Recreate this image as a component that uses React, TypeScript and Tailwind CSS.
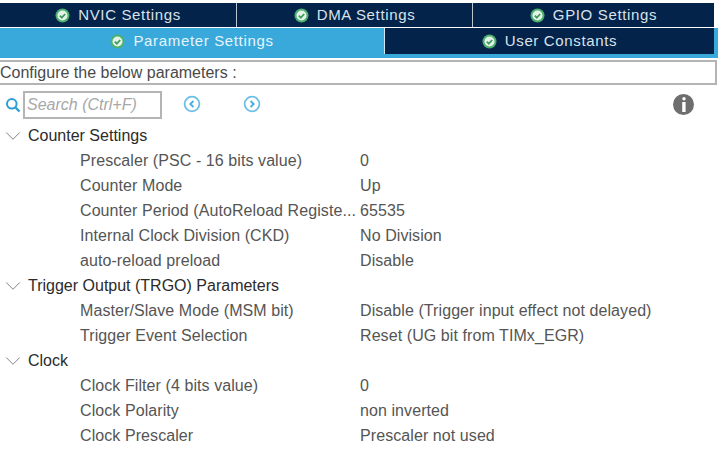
import { ChevronDown } from "lucide-react";

const CheckIcon = () => (
  <svg width="15" height="15" viewBox="0 0 15 15" className="shrink-0">
    <circle cx="7.5" cy="7.5" r="7" fill="#4caf6e" />
    <circle cx="7.5" cy="7.5" r="5" fill="#e4f3e8" />
    <path d="M4.8 7.6l2 2 3.4-3.6" fill="none" stroke="#3f9c5f" strokeWidth="1.8" />
  </svg>
);

const Tab = ({ label, className }: { label: string; className: string }) => (
  <div className={`flex items-center justify-center gap-[8px] tracking-[0.65px] text-[15px] ${className}`}>
    <CheckIcon />
    <span>{label}</span>
  </div>
);

const groups = [
  {
    title: "Counter Settings",
    rows: [
      ["Prescaler (PSC - 16 bits value)", "0"],
      ["Counter Mode", "Up"],
      ["Counter Period (AutoReload Registe...", "65535"],
      ["Internal Clock Division (CKD)", "No Division"],
      ["auto-reload preload", "Disable"],
    ],
  },
  {
    title: "Trigger Output (TRGO) Parameters",
    rows: [
      ["Master/Slave Mode (MSM bit)", "Disable (Trigger input effect not delayed)"],
      ["Trigger Event Selection", "Reset (UG bit from TIMx_EGR)"],
    ],
  },
  {
    title: "Clock",
    rows: [
      ["Clock Filter (4 bits value)", "0"],
      ["Clock Polarity", "non inverted"],
      ["Clock Prescaler", "Prescaler not used"],
    ],
  },
];

export default function App() {
  return (
    <div className="w-[718px] h-[470px] bg-white overflow-hidden font-['Liberation_Sans',sans-serif] text-[16px]">
      <div className="pt-[3px]">
        <div className="flex h-[24px] pr-[4px] text-[#d9e2ea]">
          <Tab label="NVIC Settings" className="w-[237px] bg-[#03234b] border-r border-[#b9c4cf]" />
          <Tab label="DMA Settings" className="w-[236px] bg-[#03234b] border-r border-[#b9c4cf]" />
          <Tab label="GPIO Settings" className="flex-1 bg-[#03234b]" />
        </div>
        <div className="flex h-[26px] mt-[1px] bg-[#39a9dc] pr-[4px]">
          <Tab label="Parameter Settings" className="w-[384px] text-[#e6f4fb]" />
          <Tab label="User Constants" className="flex-1 bg-[#03234b] border-l border-[#d5e6f0] text-[#d9e2ea]" />
        </div>
        <div className="h-[4px] bg-[#39a9dc]" />
      </div>

      <div className="mt-[2px] h-[25px] mr-[1px] border-y-2 border-r-2 border-[#b4b4b4] flex items-center text-[#4a4a4a]">
        Configure the below parameters :
      </div>

      <div className="flex items-center h-[36px] pt-[4px]">
        <svg width="16" height="16" viewBox="0 0 16 16" className="ml-[5px] shrink-0">
          <circle cx="6.8" cy="6.8" r="4.8" fill="none" stroke="#2e9fd6" strokeWidth="2" />
          <path d="M10.5 10.5L14.5 14.5" stroke="#2e9fd6" strokeWidth="2.4" />
        </svg>
        <div className="ml-[2px] w-[139px] h-[28px] border-2 border-[#b4b4b4] flex items-center pl-[2px] italic text-[#a8a8a8]">
          Search (Ctrl+F)
        </div>
        <svg width="18" height="18" viewBox="0 0 18 18" className="ml-[21px] mb-[2px] shrink-0">
          <circle cx="9" cy="9" r="7.4" fill="none" stroke="#6cc0e8" strokeWidth="1.8" />
          <path d="M10.4 6L7.4 9l3 3" fill="none" stroke="#4fb0e0" strokeWidth="2" />
        </svg>
        <svg width="18" height="18" viewBox="0 0 18 18" className="ml-[42px] mb-[2px] shrink-0">
          <circle cx="9" cy="9" r="7.4" fill="none" stroke="#6cc0e8" strokeWidth="1.8" />
          <path d="M7.6 6l3 3-3 3" fill="none" stroke="#4fb0e0" strokeWidth="2" />
        </svg>
        <div className="ml-auto mr-[24px] mb-[1px] w-[21px] h-[21px] rounded-full bg-[#6e6e6e] flex items-center justify-center">
          <svg width="6" height="15" viewBox="0 0 6 15">
            <circle cx="3" cy="1.8" r="1.7" fill="#fff" />
            <path d="M1.2 5h3.4v10H1.2z" fill="#fff" />
          </svg>
        </div>
      </div>

      <div className="pt-[2px]">
        {groups.map((group) => (
          <div key={group.title}>
            <div className="flex items-center h-[25px] text-[#2b2b2b]">
              <ChevronDown size={26} strokeWidth={0.8} className="shrink-0 mr-[2px] text-[#707070]" />
              <span>{group.title}</span>
            </div>
            {group.rows.map(([name, value]) => (
              <div key={name} className="flex items-center h-[25px] pl-[80px] text-[#555555] tracking-[0.08px]">
                <span className="w-[280px] whitespace-nowrap">{name}</span>
                <span className="whitespace-nowrap">{value}</span>
              </div>
            ))}
          </div>
        ))}
      </div>
    </div>
  );
}
